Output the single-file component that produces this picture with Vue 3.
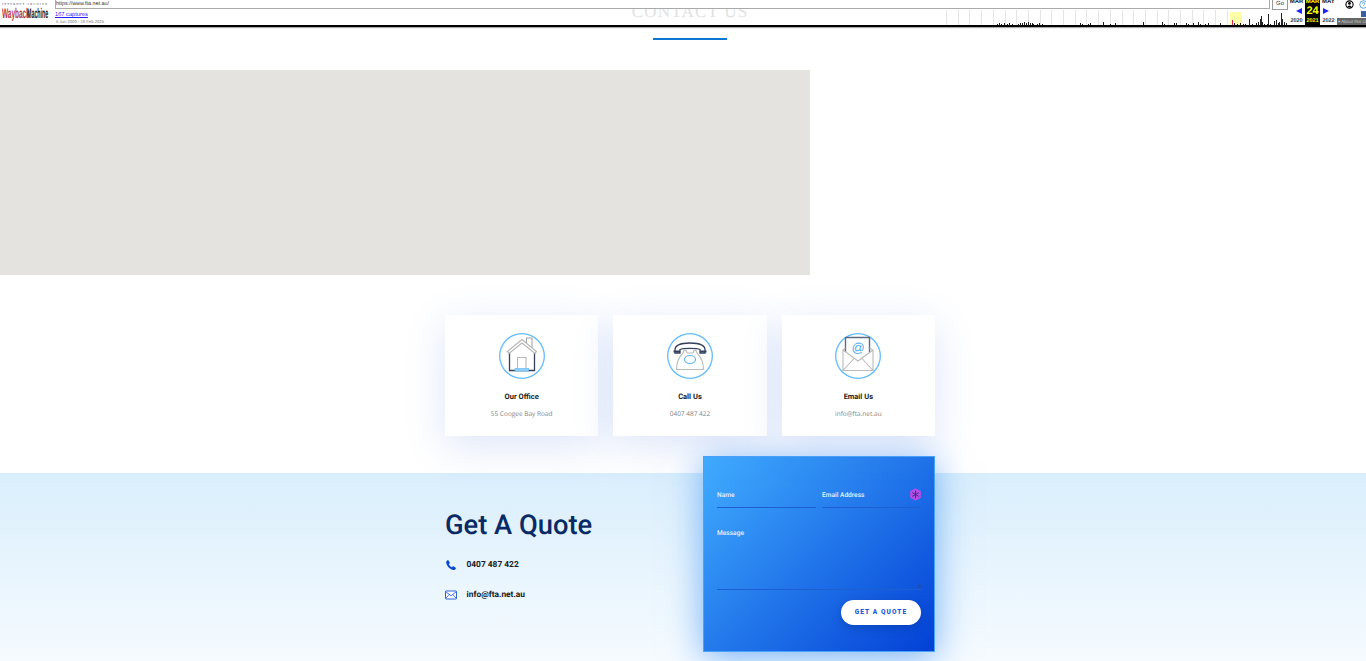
<script setup>
const ticks = Array.from({ length: 25 }, (_, i) => 946 + i * 11.7)
const hist = [
  [997,1],[999,2],[1001,1],[1004,2],[1007,1],[1009,2],[1012,1],[1018,1],[1020,2],[1022,2],[1024,3],[1026,2],[1028,3],[1030,2],[1032,2],[1033,1],[1037,1],[1039,2],[1042,1],
  [1080,2],[1082,1],[1088,1],[1090,2],[1103,3],[1110,1],[1115,2],[1143,3],[1162,3],[1164,1],[1174,2],[1176,2],[1186,2],[1188,1],[1193,2],[1198,3],[1200,1],[1205,1],[1208,2],[1220,2],
  [1234,2],[1237,1],[1240,2],[1243,1],[1245,1],[1249,6],[1252,1],[1256,2],[1258,3],[1260,6],[1261,9],[1262,3],[1264,1],[1267,1],[1268,11],[1270,1],[1274,4],[1276,5],[1278,2],[1279,3],[1281,12],[1282,6],[1284,3],[1286,2]
]
</script>

<template>
  <div class="page">
    <header class="wb">
      <div class="wb-logo">
        <div class="wb-ia">INTERNET ARCHIVE</div>
        <div class="wb-mark"><span class="wb-way">Wayback</span><span class="wb-mach">Machine</span></div>
      </div>
      <div class="wb-mid">
        <div class="wb-url">https://www.fta.net.au/</div>
        <div class="wb-cap">167 captures</div>
        <div class="wb-range">5 Jun 2000 - 19 Feb 2025</div>
      </div>
      <div class="wb-go">Go</div>
      <div class="wb-hist">
        <i v-for="t in ticks" :key="t" class="wb-tick" :style="{ left: t + 'px' }"></i>
        <i class="wb-hl"></i>
        <i v-for="b in hist" :key="b[0]" class="wb-bar" :style="{ left: b[0] + 'px', height: b[1] + 'px' }"></i>
        <i class="wb-cur"></i>
      </div>
      <div class="wb-cal">
        <div class="wb-col"><b>MAR</b><span class="arr arr-l"></span><small>2020</small></div>
        <div class="wb-col wb-now"><b>MAR</b><strong>24</strong><small>2021</small></div>
        <div class="wb-col"><b>MAY</b><span class="arr arr-r"></span><small>2022</small></div>
      </div>
      <div class="wb-tools">
        <svg class="wb-user" viewBox="0 0 10 10"><circle cx="5" cy="5" r="4" fill="#fff" stroke="#000" stroke-width="1.2"/><circle cx="5" cy="3.8" r="1.5" fill="#000"/><path d="M2.4 8a2.8 2.8 0 0 1 5.2 0z" fill="#000"/></svg>
        <svg class="wb-help" viewBox="0 0 10 10"><circle cx="5" cy="5" r="4.2" fill="#fff" stroke="#4a9fe8"/><path d="M3.8 4a1.3 1.3 0 1 1 1.7 1.3L5 6.2" fill="none" stroke="#4a9fe8"/></svg>
        <span class="wb-fb"></span>
        <div class="wb-about">▾ About this capture</div>
      </div>
    </header>

    <section class="intro">
      <h2 class="title">CONTACT US</h2>
      <div class="rule"></div>
    </section>

    <div class="map"></div>

    <section class="cards">
      <article class="card">
        <div class="ring">
          <svg viewBox="0 0 46 46" class="glyph">
            <path d="M27.5 11V5H33V16" fill="#fff" stroke="#a5a5a5" stroke-width="1.1"/>
            <path d="M10.5 19V37.5H35.5V19" fill="none" stroke="#33415c" stroke-width="1.3"/>
            <path d="M8.500 18.500L23 6.500L37.500 18.500L36 20.500L23 10L10 20.500Z" fill="#fff" stroke="#b4b4b4" stroke-width="1.1"/>
            <path d="M18.500 36V24.500H27V36" fill="#fff" stroke="#b8b8b8" stroke-width="1.1"/>
            <rect x="16" y="35.500" width="13.500" height="2.600" fill="#8fd0fb" stroke="#5cb5f5" stroke-width=".6"/>
          </svg>
        </div>
        <h3>Our Office</h3>
        <p>55 Coogee Bay Road</p>
      </article>
      <article class="card">
        <div class="ring">
          <svg viewBox="0 0 46 46" class="glyph">
            <path d="M8 20V17C8 12 13 10 23 10S38 12 38 17V20H33V16.500C30 15 16 15 13 16.500V20Z" fill="#fff" stroke="#33415c" stroke-width="1.3"/>
            <path d="M6.500 18.500H13M33 18.500H39.500" stroke="#33415c" stroke-width="2"/>
            <path d="M16 20L17 17.500H19L20 20H26L27 17.500H29L30 20C34 24 36.500 29 36.500 36.500H9.500C9.500 29 12 24 16 20Z" fill="#fff" stroke="#bbb" stroke-width="1.1"/>
            <ellipse cx="23" cy="26.500" rx="5.500" ry="4" fill="#fff" stroke="#5cb5f5" stroke-width="1.2"/>
          </svg>
        </div>
        <h3>Call Us</h3>
        <p>0407 487 422</p>
      </article>
      <article class="card">
        <div class="ring">
          <svg viewBox="0 0 46 46" class="glyph">
            <path d="M10.500 19V4.500H34.500V19" fill="#fff" stroke="#5d6b80" stroke-width="1.4"/>
            <path d="M8 17V37.500H38V17L34.500 15M10.500 15L8 17L23 28L38 17M8 37.500L19 25.500M38 37.500L27 25.500" fill="none" stroke="#bbb" stroke-width="1.1"/>
            <text x="23" y="19" text-anchor="middle" class="at">@</text>
          </svg>
        </div>
        <h3>Email Us</h3>
        <p>info@fta.net.au</p>
      </article>
    </section>

    <section class="quote">
      <div class="quote-inner">
        <div class="quote-left">
          <h2 class="quote-title">Get A Quote</h2>
          <div class="contact">
            <svg viewBox="0 0 24 24" class="c-ic"><path fill="#0a47d6" d="M6.600 2.300l3 4.600c.3.500.2 1.100-.2 1.500L7.700 10.100c1 2.600 3.400 5.300 6.200 6.500l1.700-1.700c.4-.4 1-.5 1.500-.2l4.300 2.900c.6.400.7 1.200.2 1.700l-2 2c-.6.600-1.400.900-2.200.800C10 21.200 3.200 14.200 2.300 6.600c-.1-.800.200-1.600.800-2.200l2-2c.4-.5 1.100-.5 1.500-.1z"/></svg>
            <span>0407 487 422</span>
          </div>
          <div class="contact">
            <svg viewBox="0 0 24 18" class="c-ic"><rect x="1" y="1" width="22" height="16" rx="1.500" fill="#fff" stroke="#0a47d6" stroke-width="1.700"/><path d="M1.500 2.500L12 10.500L22.500 2.500M1.500 15.500L8.500 8M22.500 15.500L15.500 8" fill="none" stroke="#0a47d6" stroke-width="1.500"/></svg>
            <span>info@fta.net.au</span>
          </div>
        </div>
        <form class="form" @submit.prevent>
          <div class="row">
            <label class="field">Name</label>
            <label class="field field-mail">Email Address
              <svg class="badge" viewBox="0 0 24 24"><path d="M12 .5L22 6.200V17.800L12 23.500L2 17.800V6.200Z" fill="#b44de6"/><path d="M12 5V19M6 8.500L18 15.500M18 8.500L6 15.500" stroke="#3d2c8c" stroke-width="1.800"/></svg>
            </label>
          </div>
          <label class="field field-msg">Message
            <svg class="grip" viewBox="0 0 6 6"><path d="M6 0V6H0Z" fill="#1d50b0"/></svg>
          </label>
          <div class="actions"><button class="btn" type="button">GET A QUOTE</button></div>
        </form>
      </div>
    </section>
  </div>
</template>

<style>
html, body { margin: 0; background: #fff; overflow: hidden; }
</style>

<style scoped>
.page { position: relative; width: 1366px; height: 661px; overflow: hidden; font-family: Roboto, "Liberation Sans", sans-serif; background: #fff; text-rendering: geometricPrecision; }

/* Wayback toolbar */
.wb { position: absolute; inset: 0 0 auto 0; height: 25px; border-bottom: 2px solid #000; box-shadow: 0 1px 1px #aaa; display: flex; font-family: "Liberation Sans", Arial, sans-serif; color: #000; z-index: 5; }
.wb-logo { width: 55px; flex: none; padding: 2px 0 0 2px; box-sizing: border-box; }
.wb-ia { font: 3px/4px "Liberation Serif", serif; letter-spacing: 1.100px; white-space: nowrap; color: #333; }
.wb-mark { display: flex; font: 700 14px/13px "Liberation Sans", sans-serif; margin-top: 1px; width: 46px; }
.wb-way { color: #b33a44; display: inline-block; transform: scaleX(.46); transform-origin: left; width: 25px; flex: none; }
.wb-mach { color: #222; display: inline-block; transform: scaleX(.38); transform-origin: left; width: 21px; flex: none; }
.wb-mid { width: 1215px; flex: none; }
.wb-url { height: 8px; border: 1px solid #aaa; border-top: 0; background: #fff; font-size: 5.400px; line-height: 8px; color: #333; }
.wb-cap { font-size: 5.700px; line-height: 8px; color: #22f; text-decoration: underline; margin-top: 2px; font-weight: 500; }
.wb-range { font-size: 4.200px; line-height: 6px; color: #777; padding-left: 1px; }
.wb-go { position: absolute; left: 1272px; top: -1px; width: 14px; height: 9px; border: 1px solid #999; background: #fff; font-size: 6px; line-height: 9px; text-align: center; color: #444; }
.wb-hist { position: absolute; inset: 0; pointer-events: none; }
.wb-tick { position: absolute; top: 10px; height: 15px; width: 1px; background: #e6e6e6; }
.wb-hl { position: absolute; left: 1230px; top: 12px; width: 12px; height: 13px; background: #ffffa8; }
.wb-bar { position: absolute; bottom: 0; width: 1px; background: #222; }
.wb-cur { position: absolute; left: 1232px; bottom: 0; width: 1px; height: 5px; background: #e0245e; }
.wb-cal { position: absolute; left: 1288px; top: 0; height: 25px; display: flex; }
.wb-col { width: 17px; height: 25px; position: relative; text-align: center; font-size: 6px; }
.wb-col b { position: absolute; left: 0; right: 0; top: 0; line-height: 5px; height: 5px; overflow: hidden; font-weight: bold; color: #222; }
.wb-col small { position: absolute; left: 0; right: 0; bottom: 0; font-size: 5.500px; line-height: 7px; font-weight: bold; color: #333; }
.wb-now { background: #000; color: #ff0; width: 15px; }
.wb-now b, .wb-now small { color: #ff0; }
.wb-now strong { position: absolute; left: 0; right: 0; top: 5px; font-size: 11px; line-height: 13px; color: #ff0; }
.arr { position: absolute; top: 8px; width: 0; height: 0; border-top: 3.500px solid transparent; border-bottom: 3.500px solid transparent; }
.arr-l { right: 3px; border-right: 6px solid #22f; }
.arr-r { left: 3px; border-left: 6px solid #22f; }
.wb-tools { position: absolute; left: 1337px; top: 0; width: 29px; height: 25px; overflow: hidden; }
.wb-user { position: absolute; left: 8px; top: 0; width: 9px; height: 9px; }
.wb-help { position: absolute; left: 22px; top: 0; width: 9px; height: 9px; }
.wb-fb { position: absolute; left: 24px; top: 11px; width: 6px; height: 6px; background: #3b5fa0; }
.wb-about { position: absolute; left: -1px; top: 18px; width: 34px; height: 7px; background: #666; color: #ccc; font-size: 4.500px; line-height: 7px; white-space: nowrap; overflow: hidden; padding-left: 2px; box-sizing: border-box; }

/* Page */
.intro { width: 490px; height: 70px; margin-left: 445px; display: flex; flex-direction: column; align-items: center; }
.title { margin: 0; height: 38px; font: 400 17px/24px "Liberation Serif", serif; color: #e2e2e2; letter-spacing: 1.200px; white-space: nowrap; }
.rule { width: 74px; height: 2px; background: #0b78d1; }
.map { width: 810px; height: 205px; background: #e4e3df; }
.cards { width: 490px; margin-left: 445px; display: flex; gap: 15px; padding-top: 40px; position: relative; z-index: 2; }
.card { flex: 1; height: 121px; background: #fff; box-shadow: 0 10px 40px rgba(60, 110, 220, .18); display: flex; flex-direction: column; align-items: center; box-sizing: border-box; padding-top: 18px; }
.ring { width: 46px; height: 46px; flex: none; }
.glyph { display: block; width: 46px; height: 46px; border-radius: 50%; box-shadow: inset 0 0 0 1.300px #62bcf8; }
.at { font: 13px "Liberation Sans", sans-serif; fill: #4aa9ee; }
.card h3 { margin: 12px 0 0; font: 700 7.500px/12px Roboto, sans-serif; color: #222; }
.card p { margin: 5px 0 0; font: 400 6.500px/12px "Open Sans", sans-serif; color: #858585; }

.quote { height: 188px; margin-top: 37px; background: linear-gradient(#d9eefc, #f6fbff); position: relative; }
.quote-inner { width: 490px; margin-left: 445px; display: flex; justify-content: space-between; }
.quote-left { padding-top: 35px; }
.quote-title { margin: 0 0 14px; font: 500 27.300px/34px Roboto, sans-serif; color: #0a2a66; white-space: nowrap; }
.contact { display: flex; align-items: center; gap: 9.500px; height: 18px; margin-bottom: 12px; font: 700 8.400px/18px Roboto, sans-serif; color: #1b1b1b; }
.c-ic { width: 12px; height: 12px; flex: none; }
.form { width: 232px; height: 196px; margin-top: -17px; box-sizing: border-box; padding: 31px 13px 0; background: linear-gradient(135deg, #41adff, #0340d6); box-shadow: 0 6px 34px rgba(20, 120, 240, .55); border: 1px solid #4aa3fa; display: flex; flex-direction: column; position: relative; }
.row { display: flex; gap: 6px; }
.field { display: block; flex: 1; height: 19px; border-bottom: 1px solid #1d5fd0; color: #e8f3ff; font: 500 6.600px/14px Roboto, sans-serif; position: relative; }
.badge { position: absolute; right: -1px; top: 0; width: 13px; height: 13px; }
.field-msg { flex: none; height: 63px; margin-top: 18px; }
.grip { position: absolute; right: 0; bottom: 1px; width: 5px; height: 5px; }
.actions { display: flex; justify-content: flex-end; margin-top: 10px; }
.btn { width: 80px; height: 25px; border: 0; border-radius: 13px; background: #fff; color: #1e58d6; font: 900 6.500px/25px Roboto, sans-serif; letter-spacing: 1.100px; box-shadow: 0 3px 8px rgba(10, 50, 140, .4); padding: 0; }
</style>
